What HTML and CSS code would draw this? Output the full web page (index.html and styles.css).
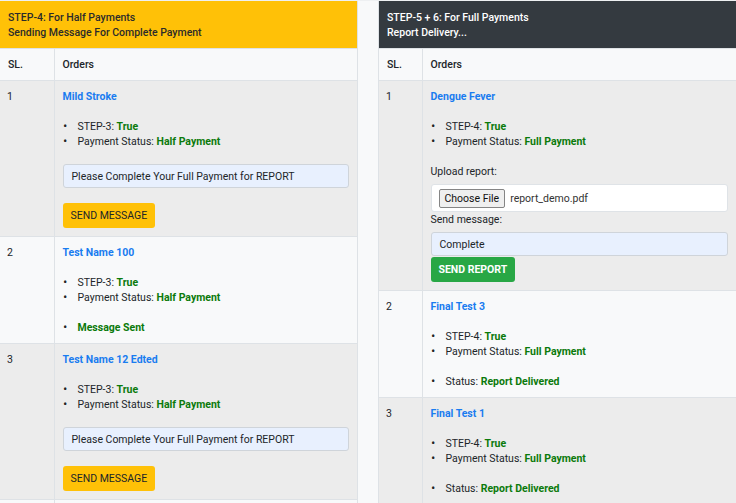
FILE: index.html
```html
<!DOCTYPE html>
<html lang="en">
<head>
<meta charset="utf-8">
<title>Orders</title>
<link rel="stylesheet" href="styles.css">
</head>
<body>
<div class="board">
  <section class="panel panel-half">
    <div class="panel-head head-warn">STEP-4: For Half Payments<br>Sending Message For Complete Payment</div>
    <table class="orders">
      <colgroup><col class="col-sl"><col></colgroup>
      <thead>
        <tr><th>SL.</th><th>Orders</th></tr>
      </thead>
      <tbody>
        <tr class="striped">
          <td class="sl">1</td>
          <td>
            <a class="order-name">Mild Stroke</a>
            <ul class="facts">
              <li>STEP-3: <b class="ok">True</b></li>
              <li>Payment Status: <b class="ok">Half Payment</b></li>
            </ul>
            <div class="text-field">Please Complete Your Full Payment for REPORT</div>
            <button class="btn btn-warn">SEND MESSAGE</button>
          </td>
        </tr>
        <tr>
          <td class="sl">2</td>
          <td>
            <a class="order-name">Test Name 100</a>
            <ul class="facts">
              <li>STEP-3: <b class="ok">True</b></li>
              <li>Payment Status: <b class="ok">Half Payment</b></li>
            </ul>
            <ul class="facts facts-last">
              <li><b class="ok">Message Sent</b></li>
            </ul>
          </td>
        </tr>
        <tr class="striped">
          <td class="sl">3</td>
          <td>
            <a class="order-name">Test Name 12 Edted</a>
            <ul class="facts">
              <li>STEP-3: <b class="ok">True</b></li>
              <li>Payment Status: <b class="ok">Half Payment</b></li>
            </ul>
            <div class="text-field">Please Complete Your Full Payment for REPORT</div>
            <button class="btn btn-warn">SEND MESSAGE</button>
          </td>
        </tr>
        <tr class="spacer">
          <td></td>
          <td></td>
        </tr>
      </tbody>
    </table>
  </section>

  <section class="panel panel-full">
    <div class="panel-head head-dark">STEP-5 + 6: For Full Payments<br>Report Delivery...</div>
    <table class="orders">
      <colgroup><col class="col-sl"><col></colgroup>
      <thead>
        <tr><th>SL.</th><th>Orders</th></tr>
      </thead>
      <tbody>
        <tr class="striped">
          <td class="sl">1</td>
          <td>
            <a class="order-name">Dengue Fever</a>
            <ul class="facts">
              <li>STEP-4: <b class="ok">True</b></li>
              <li>Payment Status: <b class="ok">Full Payment</b></li>
            </ul>
            <div class="field-label">Upload report:</div>
            <div class="file-field"><span class="file-btn">Choose File</span><span class="file-name">report_demo.pdf</span></div>
            <div class="field-label">Send message:</div>
            <div class="text-field">Complete</div>
            <button class="btn btn-success">SEND REPORT</button>
          </td>
        </tr>
        <tr>
          <td class="sl">2</td>
          <td>
            <a class="order-name">Final Test 3</a>
            <ul class="facts">
              <li>STEP-4: <b class="ok">True</b></li>
              <li>Payment Status: <b class="ok">Full Payment</b></li>
            </ul>
            <ul class="facts facts-last">
              <li>Status: <b class="ok">Report Delivered</b></li>
            </ul>
          </td>
        </tr>
        <tr class="striped">
          <td class="sl">3</td>
          <td>
            <a class="order-name">Final Test 1</a>
            <ul class="facts">
              <li>STEP-4: <b class="ok">True</b></li>
              <li>Payment Status: <b class="ok">Full Payment</b></li>
            </ul>
            <ul class="facts facts-last">
              <li>Status: <b class="ok">Report Delivered</b></li>
            </ul>
          </td>
        </tr>
      </tbody>
    </table>
  </section>
</div>
</body>
</html>
```
FILE: styles.css
```css
html, body {
  margin: 0;
  padding: 0;
  background: #f8f9fa;
  overflow: hidden;
}
body {
  font-family: Roboto, "Liberation Sans", Arial, sans-serif;
  font-size: 10.5px;
  line-height: 15px;
  color: #212529;
}
.board {
  display: flex;
  gap: 20px;
  margin-left: -1px;
  border-top: 1px solid #eef0f2;
}
.panel {
  width: 359px;
  flex: none;
  box-sizing: border-box;
  border-left: 1px solid #dee2e6;
  border-right: 1px solid #dee2e6;
}
.panel-head {
  padding: 9px 8px 8px;
  font-weight: 500;
}
.head-warn { background: #ffc107; color: #2b2b2b; }
.head-dark { background: #343a40; color: #fff; }

.orders {
  width: 100%;
  border-collapse: collapse;
  table-layout: fixed;
}
.panel-half .col-sl { width: 54px; }
.panel-full .col-sl { width: 43px; }
.orders th, .orders td {
  padding: 8px;
  text-align: left;
  vertical-align: top;
  border-top: 1px solid #dee2e6;
}
.orders th + th, .orders td + td { border-left: 1px solid #dee2e6; }
.orders th {
  font-weight: 500;
  padding-top: 8px;
  padding-bottom: 8px;
}
.orders tr.striped td { background: #ececec; }
.orders td.sl { padding-left: 7px; }
.orders tr.spacer td { height: 20px; padding: 0; }

.order-name {
  display: block;
  color: #1a7cf0;
  font-weight: 700;
}
.facts {
  margin: 15px 0 15px;
  padding-left: 15px;
}
.facts li::marker {
  content: "\2022\00a0\00a0\00a0\00a0";
  font-weight: 700;
  color: #222;
}
.facts-last { margin-bottom: 0; }
.ok { color: #0b7a0b; font-weight: 700; }

.text-field {
  box-sizing: border-box;
  height: 24px;
  padding: 4px 8px;
  border: 1px solid #cfd4da;
  border-radius: 3px;
  background: #e8f0fe;
  color: #212529;
}
.btn {
  display: block;
  height: 25px;
  padding: 0 8px;
  border: 0;
  border-radius: 3px;
  font-family: inherit;
  font-size: 10.5px;
  line-height: 25px;
  cursor: pointer;
}
.btn-warn {
  margin-top: 15px;
  background: #ffc107;
  color: #212529;
}
.btn-success {
  margin-top: 1px;
  background: #28a745;
  color: #fff;
  font-weight: 700;
}
.field-label {
  margin-bottom: 5px;
}
.file-field {
  box-sizing: border-box;
  height: 28px;
  display: flex;
  align-items: center;
  padding: 0 7px;
  border: 1px solid #dfe3e7;
  border-radius: 3px;
  background: #fff;
}
.file-btn {
  box-sizing: border-box;
  height: 19px;
  line-height: 17px;
  padding: 0 5px;
  border: 1px solid #858585;
  border-radius: 2px;
  background: #efefef;
  color: #111;
  margin-right: 5px;
}
.file-name { color: #333; }
```
